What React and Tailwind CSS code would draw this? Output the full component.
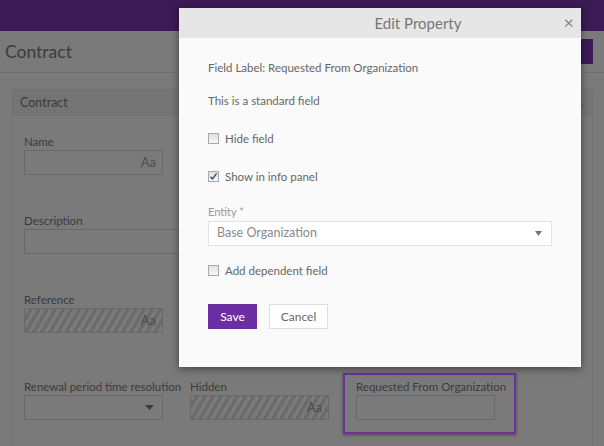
import React from "react";

const hatch =
  "bg-[repeating-linear-gradient(120deg,#f4f4f4_0px,#f4f4f4_3.5px,#d6d6d6_3.5px,#d6d6d6_7px)]";

function Field({ label, children, className = "" }) {
  return (
    <div className={`flex flex-col ${className}`}>
      <div className="h-[17px] text-[11.5px] leading-[17px] text-[#777] whitespace-nowrap">{label}</div>
      {children}
    </div>
  );
}

function TextBox({ hatched = false, aa = true, className = "w-[139px]" }) {
  return (
    <div
      className={`h-[25px] border border-[#d2d2d2] flex items-center justify-end pr-[6px] ${
        hatched ? hatch : "bg-[#f5f5f5]"
      } ${className}`}
    >
      {aa && <span className="text-[13px] text-[#9a9a9a]">Aa</span>}
    </div>
  );
}

function Check({ checked, label }) {
  return (
    <label className="flex items-center gap-[6px] h-[17px]">
      <span className="w-[11px] h-[11px] border border-[#a8a8a8] bg-[linear-gradient(#e2e2e2,#f6f6f6)] flex items-center justify-center">
        {checked && (
          <svg width="9" height="9" viewBox="0 0 9 9">
            <path d="M1.5 4.8 L3.5 7 L7.6 1.4" fill="none" stroke="#2b4c8c" strokeWidth="1.4" />
          </svg>
        )}
      </span>
      <span className="text-[11.5px] text-[#666]">{label}</span>
    </label>
  );
}

export default function App() {
  return (
    <div className="relative w-[604px] h-[446px] overflow-hidden bg-[#f5f5f5] font-['Segoe_UI','Lato',sans-serif]">
      {/* top bar */}
      <div className="h-[31px] bg-[#7634ab]" />
      {/* page header */}
      <div className="h-[42px] flex items-center border-b border-[#dcdcdc] pl-[5px] pr-[11px]">
        <h1 className="text-[17.5px] text-[#777] leading-none">Contract</h1>
        <div className="ml-auto w-[90px] h-[25px] bg-[#7634ab]" />
      </div>
      {/* contract panel */}
      <div className="mt-[16px] ml-[12px] mr-[11px] border border-[#e4e4e4] h-[400px]">
        <div className="h-[26px] bg-[#e8e8e8] flex items-center px-[7px]">
          <span className="text-[12.5px] text-[#777]">Contract</span>
          <span className="ml-auto text-[10px] text-[#999]">⌄</span>
        </div>
        <div className="pl-[11px] pt-[17px] flex flex-col gap-[37px]">
          <Field label="Name">
            <TextBox />
          </Field>
          <Field label="Description">
            <TextBox aa={false} className="w-[305px]" />
          </Field>
          <Field label="Reference">
            <TextBox hatched />
          </Field>
          <div className="mt-[8px] flex">
            <Field label="Renewal period time resolution" className="w-[166px]">
              <div className="w-[139px] h-[25px] border border-[#d2d2d2] bg-[#f5f5f5] flex items-center justify-end pr-[8px]">
                <svg width="9" height="5" viewBox="0 0 9 5">
                  <path d="M0 0 H9 L4.5 5 Z" fill="#777" />
                </svg>
              </div>
            </Field>
            <Field label="Hidden" className="w-[166px]">
              <TextBox hatched />
            </Field>
            <Field label="Requested From Organization" className="w-[166px]">
              <TextBox aa={false} />
            </Field>
          </div>
        </div>
      </div>

      {/* dim layer */}
      <div className="absolute inset-0 bg-black/50" />

      {/* highlighted field outline */}
      <div className="absolute left-[343px] top-[373px] w-[173px] h-[61px] border-2 border-[#6d2fa0] shadow-[0_1px_3px_rgba(0,0,0,0.4)]" />

      {/* Edit Property dialog */}
      <div className="absolute left-[179px] top-[8px] w-[402px] h-[359px] bg-[#fafafa] shadow-[0_2px_8px_rgba(0,0,0,0.45)] flex flex-col">
        <div className="h-[30px] bg-[#e6e6e6] flex items-center justify-center relative pl-[76px]">
          <span className="text-[15px] text-[#777]">Edit Property</span>
          <span className="absolute right-[7px] top-[5px] text-[18px] leading-none text-[#888]">×</span>
        </div>
        <div className="pl-[29px] pr-[29px] flex flex-col">
          <div className="mt-[21px] h-[17px] text-[11.5px] leading-[17px] text-[#666]">
            Field Label: Requested From Organization
          </div>
          <div className="mt-[16px] h-[17px] text-[11.5px] leading-[17px] text-[#666]">
            This is a standard field
          </div>
          <div className="mt-[21px]">
            <Check label="Hide field" />
          </div>
          <div className="mt-[21px]">
            <Check checked label="Show in info panel" />
          </div>
          <div className="mt-[19px] h-[15px] text-[11px] leading-[15px] text-[#999]">Entity *</div>
          <div className="mt-[2px] h-[25px] border border-[#e3e3e3] bg-white flex items-center pl-[8px] pr-[9px]">
            <span className="text-[12.5px] text-[#8a8a8a]">Base Organization</span>
            <svg className="ml-auto" width="7" height="5" viewBox="0 0 7 5">
              <path d="M0 0 H7 L3.5 5 Z" fill="#777" />
            </svg>
          </div>
          <div className="mt-[16px]">
            <Check label="Add dependent field" />
          </div>
          <div className="mt-[25px] flex gap-[12px]">
            <button className="w-[49px] h-[25px] bg-[#6d2ea3] text-white text-[12px]">Save</button>
            <button className="w-[59px] h-[25px] bg-white border border-[#dedede] text-[#666] text-[12px]">
              Cancel
            </button>
          </div>
        </div>
      </div>
    </div>
  );
}
